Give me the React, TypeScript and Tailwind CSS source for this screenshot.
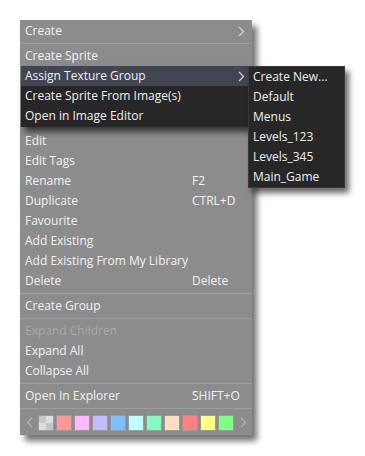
import React from "react";

const Chevron = ({ color = "#d0d0d0" }: { color?: string }) => (
  <svg width="7" height="11" viewBox="0 0 7 11" className="block">
    <polyline points="1,1 5.5,5.5 1,10" fill="none" stroke={color} strokeWidth="1.3" />
  </svg>
);

const ChevronLeft = ({ color = "#b0b0b0" }: { color?: string }) => (
  <svg width="7" height="11" viewBox="0 0 7 11" className="block">
    <polyline points="6,1 1.5,5.5 6,10" fill="none" stroke={color} strokeWidth="1.3" />
  </svg>
);

function Row({ label, shortcut, disabled }: { label: string; shortcut?: string; disabled?: boolean }) {
  return (
    <div className={`h-[20px] flex items-center pl-[5px] ${disabled ? "text-[#a9a9a9]" : "text-[#f2f2f2]"}`}>
      <span className="w-[167px] whitespace-nowrap">{label}</span>
      {shortcut && <span className="whitespace-nowrap">{shortcut}</span>}
    </div>
  );
}

const Sep = () => <div className="my-[2px] h-px bg-[#9d9d9d]" />;

const swatches = ["#ff9999", "#ffb8ff", "#bfbfff", "#80bfff", "#bfffff", "#80ffbf", "#ffdfbf", "#ff8080", "#ffff80", "#80ff80"];

export default function App() {
  return (
    <div className="w-[365px] h-[456px] bg-white pt-[20px] pl-[20px]" style={{ fontFamily: '"Open Sans", "Noto Sans", sans-serif' }}>
      <div className="relative w-[232px] bg-[#8c8c8c] text-[12px] leading-none shadow-[5px_6px_6px_rgba(0,0,0,0.55)] pt-px pb-px">
        <div className="h-[20px] flex items-center pl-[5px] pr-[7px] text-[#f2f2f2]">
          <span className="flex-1">Create</span>
          <Chevron />
        </div>
        <Sep />
        <Row label="Create Sprite" />
        <div className="relative ml-px w-[227px] bg-[#272727] shadow-[4px_5px_6px_rgba(0,0,0,0.6)] pb-px">
          <div className="h-[20px] flex items-center pl-[4px] pr-[3px] bg-[#424652] text-[#f0f0f0]">
            <span className="flex-1">Assign Texture Group</span>
            <Chevron />
          </div>
          <div className="h-[20px] flex items-center pl-[4px] text-[#f0f0f0]">Create Sprite From Image(s)</div>
          <div className="h-[20px] flex items-center pl-[4px] text-[#f0f0f0]">Open in Image Editor</div>
          <div className="absolute left-full top-0 w-[97px] bg-[#272727] border border-[#3a3a3a] shadow-[4px_5px_6px_rgba(0,0,0,0.6)] text-[#f0f0f0]">
            {["Create New...", "Default", "Menus", "Levels_123", "Levels_345", "Main_Game"].map((t) => (
              <div key={t} className="h-[20px] flex items-center pl-[4px] whitespace-nowrap">{t}</div>
            ))}
          </div>
        </div>
        <div className="h-[4px]" />
        <Row label="Edit" />
        <Row label="Edit Tags" />
        <Row label="Rename" shortcut="F2" />
        <Row label="Duplicate" shortcut="CTRL+D" />
        <Row label="Favourite" />
        <Row label="Add Existing" />
        <Row label="Add Existing From My Library" />
        <Row label="Delete" shortcut="Delete" />
        <Sep />
        <Row label="Create Group" />
        <Sep />
        <Row label="Expand Children" disabled />
        <Row label="Expand All" />
        <Row label="Collapse All" />
        <Sep />
        <Row label="Open In Explorer" shortcut="SHIFT+O" />
        <Sep />
        <div className="h-[23px] flex items-center pl-[6px]">
          <ChevronLeft />
          <div className="flex gap-[2px] ml-[5px]">
            <div className="w-[16px] h-[16px] border border-[#9a9a9a] grid grid-cols-2 grid-rows-2">
              <div className="bg-[#c6c6c6]" />
              <div className="bg-[#dedede]" />
              <div className="bg-[#dedede]" />
              <div className="bg-[#c6c6c6]" />
            </div>
            {swatches.map((c) => (
              <div key={c} className="w-[16px] h-[16px] border border-[#9a9a9a]" style={{ backgroundColor: c }} />
            ))}
          </div>
          <div className="ml-[6px]">
            <Chevron color="#b0b0b0" />
          </div>
        </div>
      </div>
    </div>
  );
}
